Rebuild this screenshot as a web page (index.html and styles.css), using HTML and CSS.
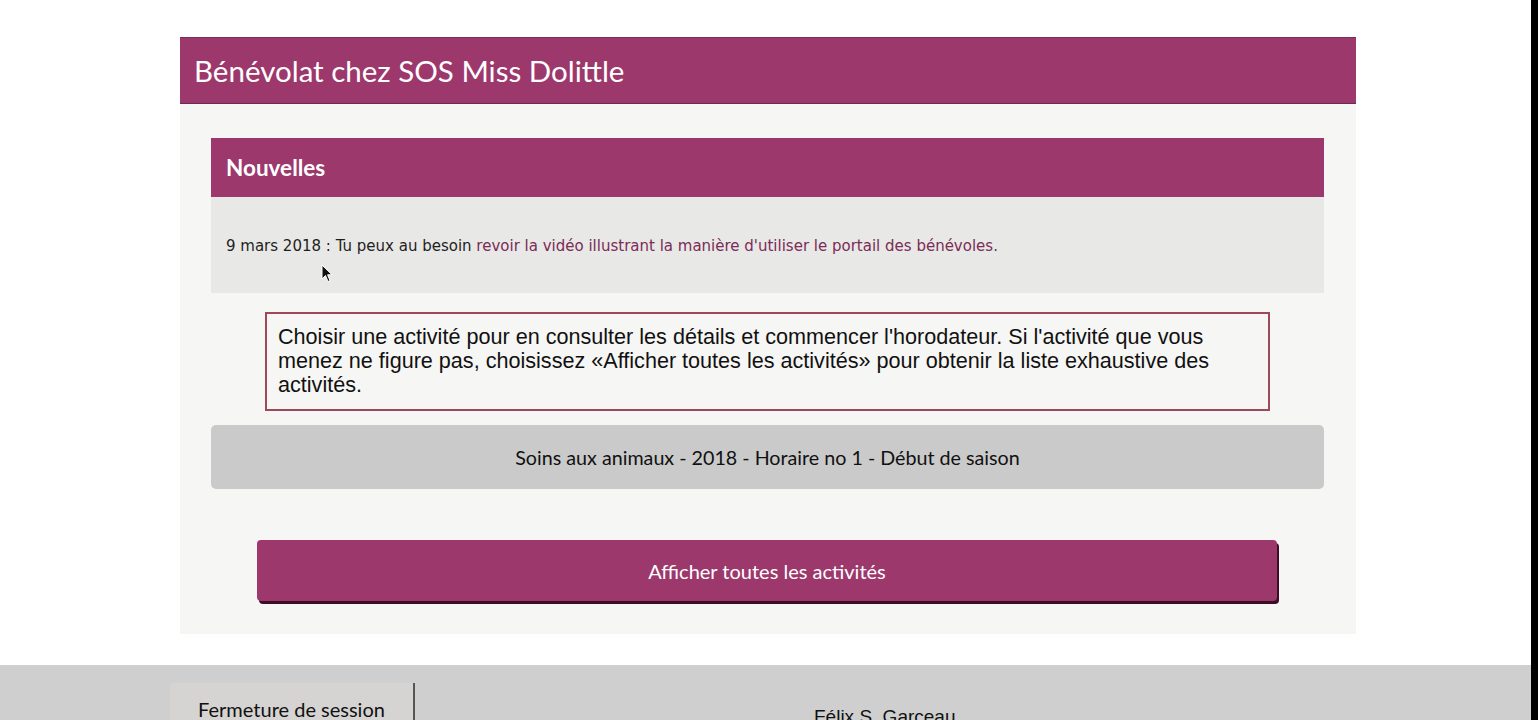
FILE: index.html
```html
<!DOCTYPE html>
<html lang="fr">
<head>
    <meta charset="UTF-8">
    <meta name="viewport" content="width=device-width, initial-scale=1.0">
    <title>Portail des bénévoles - SOS Miss Dolittle</title>
    <link rel="stylesheet" href="styles.css">
</head>
<body>
    <div class="page">
        <main class="portal">
            <header class="portal-header">
                <h1>Bénévolat chez SOS Miss Dolittle</h1>
            </header>

            <div class="portal-body">
                <section class="news">
                    <h2 class="news-title">Nouvelles</h2>
                    <div class="news-content">
                        <p>9 mars 2018 : Tu peux au besoin <a href="#">revoir la vidéo illustrant la manière d'utiliser le portail des bénévoles.</a></p>
                        <!-- mouse pointer -->
                        <svg class="pointer" width="12" height="19" viewBox="0 0 12 19">
                            <path d="M1 1 L1 15 L4.5 11.5 L7 17.5 L9 16.6 L6.6 10.8 L11 10.8 Z" fill="#111" stroke="#fff" stroke-width="1"/>
                        </svg>
                    </div>
                </section>

                <p class="instructions">Choisir une activité pour en consulter les détails et commencer l'horodateur. Si l'activité que vous menez ne figure pas, choisissez «Afficher toutes les activités» pour obtenir la liste exhaustive des activités.</p>

                <button type="button" class="activity-btn">Soins aux animaux - 2018 - Horaire no 1 - Début de saison</button>

                <button type="button" class="all-btn">Afficher toutes les activités</button>
            </div>
        </main>

        <footer class="footer">
            <button type="button" class="logout-btn">Fermeture de session</button>
            <div class="user-name">Félix S. Garceau</div>
        </footer>
    </div>
</body>
</html>
```

FILE: styles.css
```css
* { margin: 0; padding: 0; box-sizing: border-box; }

body {
    background: #000;
    font-family: Lato, "Open Sans", sans-serif;
    overflow: hidden;
}

.page {
    width: 1531px;
    height: 100vh;
    background: #fff;
    padding-top: 37px;
    overflow: hidden;
}

.portal {
    width: 1176px;
    margin-left: 180px;
    background: #f6f6f4;
}

.portal-header {
    background: #9c386b;
    height: 67px;
    padding-left: 14px;
    display: flex;
    align-items: center;
    border-top: 1px solid #7c2d55;
    border-bottom: 1px solid #6e2a4c;
}

.portal-header h1 {
    color: #fff;
    font-size: 29.5px;
    font-weight: 400;
}

.portal-body {
    padding: 34px 32px 33px 31px;
}

.news-title {
    background: #9c386b;
    color: #fff;
    height: 59px;
    padding-left: 15px;
    display: flex;
    align-items: center;
    font-size: 22.5px;
    font-weight: 700;
}

.news-content {
    position: relative;
    background: #e8e8e6;
    height: 96px;
    padding: 40px 15px 0;
    font-family: "DejaVu Sans", sans-serif;
    font-size: 15px;
    color: #1e1e1e;
}

.news-content a {
    color: #7b2c57;
    text-decoration: none;
}

.pointer {
    position: absolute;
    left: 110px;
    top: 67px;
}

.instructions {
    margin: 19px 54px 0;
    border: 2px solid #9b4a5a;
    padding: 11px 40px 12px 11px;
    font-family: "Liberation Sans", Arial, sans-serif;
    font-size: 21.6px;
    line-height: 24px;
    color: #111;
}

.activity-btn {
    display: block;
    width: 100%;
    height: 64px;
    margin-top: 14px;
    background: #cacaca;
    border: none;
    border-radius: 5px;
    font-family: Lato, sans-serif;
    font-size: 19.7px;
    color: #111;
}

.all-btn {
    display: block;
    width: 1020px;
    height: 61px;
    margin: 51px 0 0 46px;
    background: #9c386b;
    border: none;
    border-radius: 4px;
    box-shadow: 2px 3px 0 #3c0f27;
    color: #fff;
    font-family: Lato, sans-serif;
    font-size: 20px;
}

.footer {
    margin-top: 31px;
    background: #cfcfcf;
    height: 100px;
    display: flex;
    align-items: flex-start;
    padding: 18px 0 0 170px;
}

.logout-btn {
    width: 245px;
    height: 60px;
    background: #d5d4d2;
    border: none;
    border-right: 2px solid #555;
    border-radius: 4px 0 0 0;
    padding: 0 0 8px 0;
    font-family: Lato, sans-serif;
    font-size: 20px;
    color: #111;
}

.user-name {
    margin: 23px 0 0 399px;
    font-family: "Liberation Sans", Arial, sans-serif;
    font-size: 19px;
    color: #111;
}
```
